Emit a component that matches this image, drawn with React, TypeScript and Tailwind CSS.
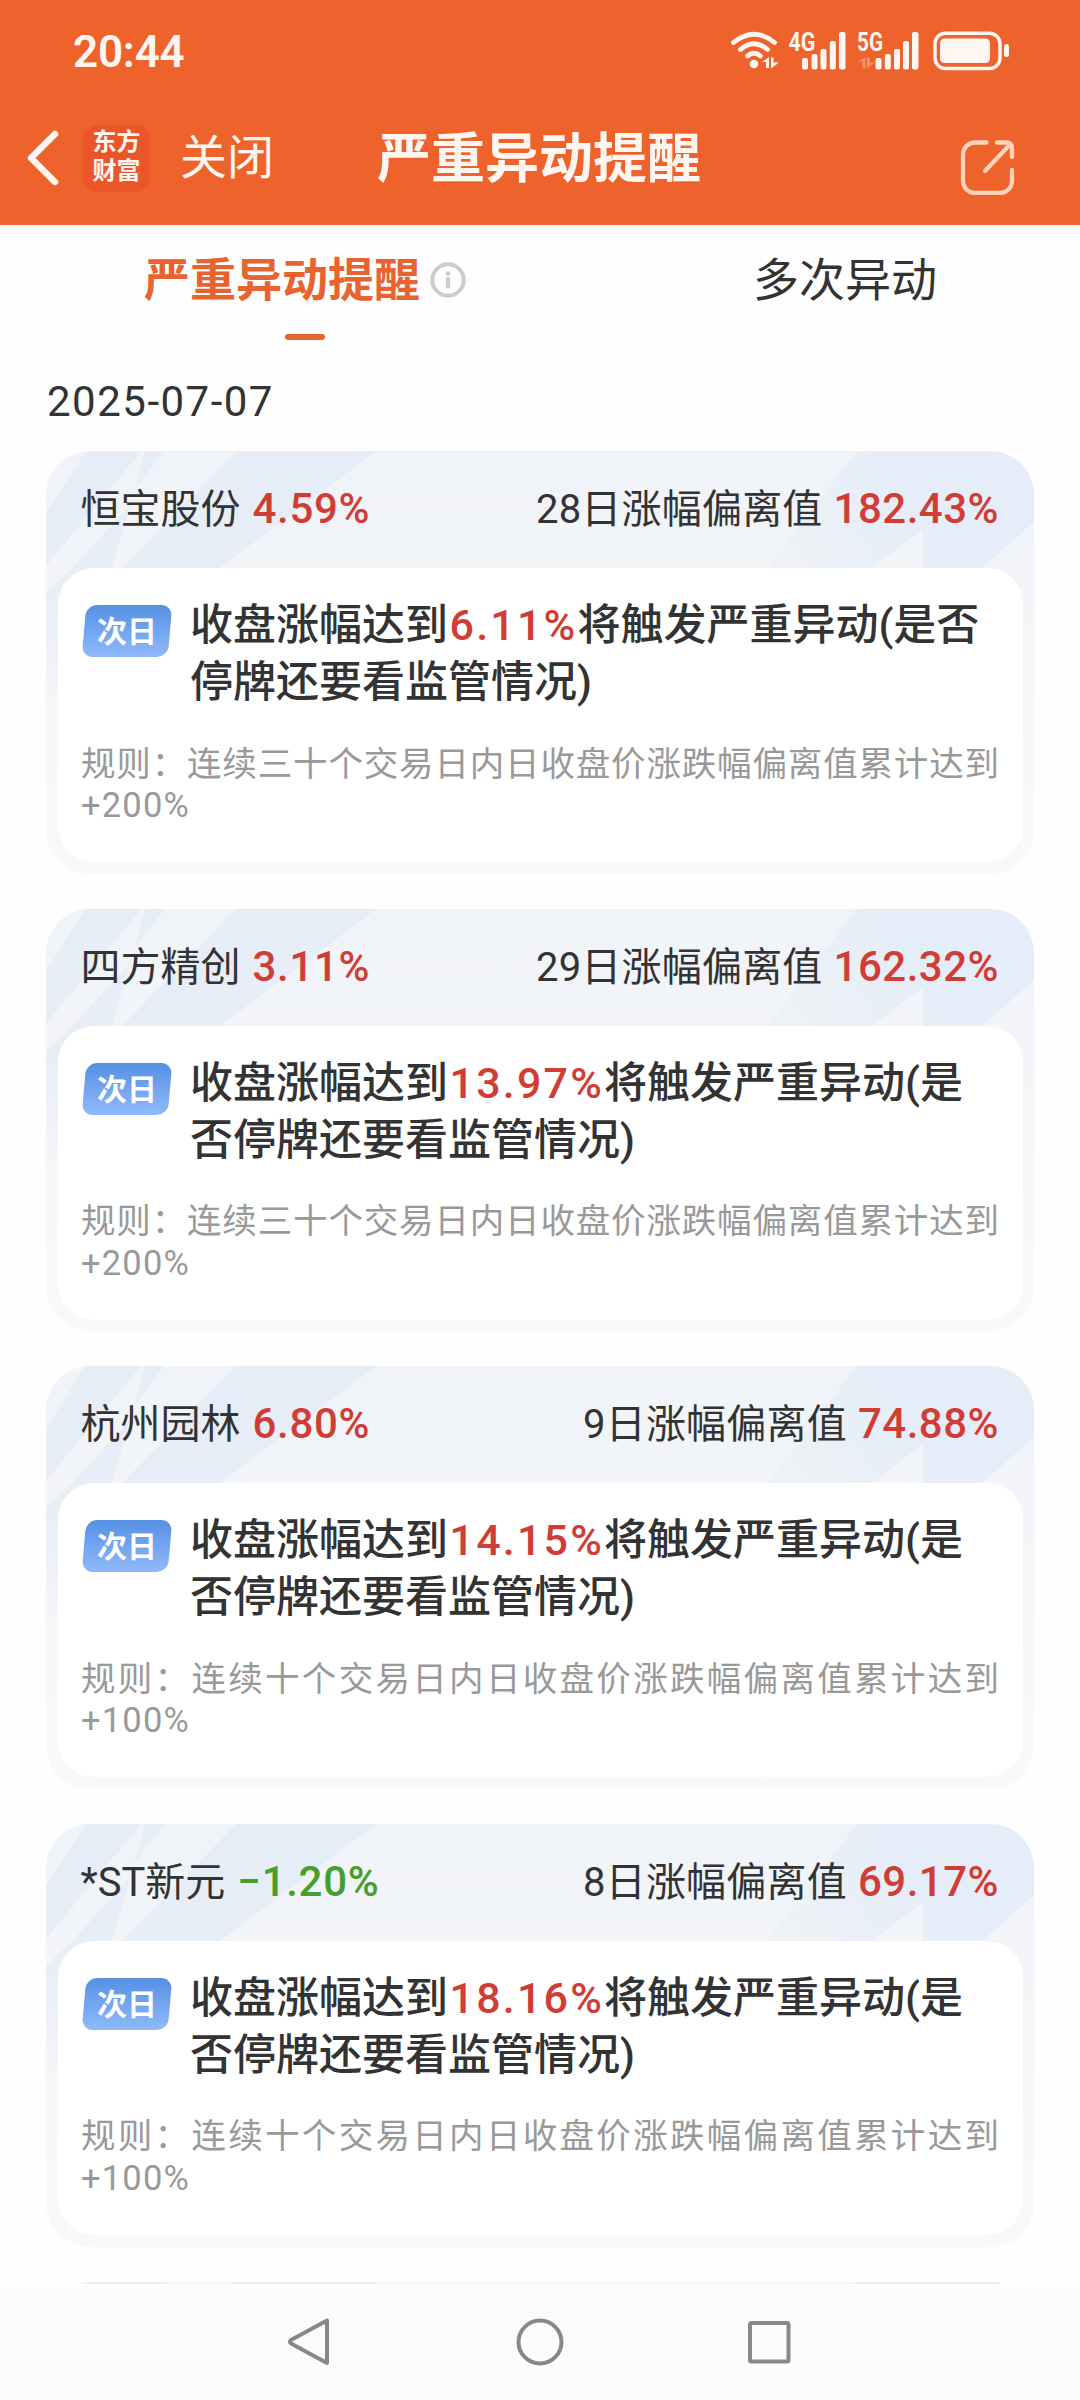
import React, { useState } from 'react';

interface StockAlert {
  name: string;
  change: string;
  days: number;
  deviation: string;
  target: string;
  rule: string;
  limit: string;
}

const alerts: StockAlert[] = [
  {
    name: '恒宝股份',
    change: '4.59%',
    days: 28,
    deviation: '182.43%',
    target: '6.11%',
    rule: '规则：连续三十个交易日内日收盘价涨跌幅偏离值累计达到',
    limit: '+200%',
  },
  {
    name: '四方精创',
    change: '3.11%',
    days: 29,
    deviation: '162.32%',
    target: '13.97%',
    rule: '规则：连续三十个交易日内日收盘价涨跌幅偏离值累计达到',
    limit: '+200%',
  },
  {
    name: '杭州园林',
    change: '6.80%',
    days: 9,
    deviation: '74.88%',
    target: '14.15%',
    rule: '规则：连续十个交易日内日收盘价涨跌幅偏离值累计达到',
    limit: '+100%',
  },
  {
    name: '*ST新元',
    change: '-1.20%',
    days: 8,
    deviation: '69.17%',
    target: '18.16%',
    rule: '规则：连续十个交易日内日收盘价涨跌幅偏离值累计达到',
    limit: '+100%',
  },
];

const StatusIcons: React.FC = () => (
  <svg width="290" height="50" viewBox="725 25 290 50" fill="#fff6f1">
    {/* wifi */}
    <g fill="none" stroke="#fff6f1" strokeWidth="4.8" strokeLinecap="round">
      <path d="M733.5 42.5Q754 26 774.5 42.5" />
      <path d="M740.5 49.5Q754 38 767.5 49.5" />
      <path d="M747.5 56Q754 50.5 760.5 56" />
    </g>
    <circle cx="754" cy="64" r="4.3" />
    <path d="M769 57v11h-3v-6h-4zM771 68.500v-11h2.500v5h5.500z" />
    {/* sim 1 */}
    <text x="788.5" y="51" className="text-[26px] font-bold" textLength="27" lengthAdjust="spacingAndGlyphs">4G</text>
    <rect x="802" y="58" width="6" height="11.5" rx="2" />
    <rect x="811.5" y="54" width="6" height="15.5" rx="2" />
    <rect x="820.5" y="49" width="6" height="20.5" rx="2" />
    <rect x="829.8" y="41" width="6" height="28.5" rx="2" />
    <rect x="839" y="32" width="6.5" height="37.5" rx="2" />
    {/* sim 2 */}
    <text x="857" y="51" className="text-[26px] font-bold" textLength="26" lengthAdjust="spacingAndGlyphs">5G</text>
    <path d="M865.5 57.5v11h-3v-7h-5zM867 68.5v-11h2.5v5h5z" fill="#f8946a" />
    <rect x="875.5" y="58" width="6" height="11.5" rx="2" />
    <rect x="884.8" y="54" width="6" height="15.5" rx="2" />
    <rect x="894" y="49" width="6" height="20.5" rx="2" />
    <rect x="903" y="41" width="6" height="28.5" rx="2" />
    <rect x="912" y="32" width="6.5" height="37.5" rx="2" />
    {/* battery */}
    <rect x="935" y="33.2" width="65" height="35.3" rx="10.5" fill="none" stroke="#fff6f1" strokeWidth="3.4" />
    <rect x="940" y="38.5" width="50" height="24.5" rx="4.5" />
    <rect x="1004" y="44" width="5" height="13" rx="2.5" />
  </svg>
);

const Header: React.FC = () => (
  <header className="h-[225px] bg-[#ed632b] text-[#fff6f1]">
    <div className="flex h-[100px] items-center justify-between pl-[73px] pr-[65px]">
      <span className="pt-[3px] text-[44px] font-semibold leading-none tracking-[-0.2px]">20:44</span>
      <StatusIcons />
    </div>
    <div className="flex h-[116px] items-center">
      <button className="ml-[25px] w-9" aria-label="返回">
        <svg width="36" height="56" viewBox="0 0 36 56" fill="none" stroke="#fff6f1" strokeWidth="6.5" strokeLinecap="round" strokeLinejoin="round">
          <path d="M30 4L6 28l24 24" />
        </svg>
      </button>
      <div className="ml-[22px] flex h-[67px] w-[67px] flex-col items-center justify-center rounded-[14px] bg-[#eb552a] pb-[3px] text-[24px] font-bold leading-[29px]">
        <span>东方</span>
        <span>财富</span>
      </div>
      <span className="ml-[30px] w-[100px] text-[47px] leading-[60px]">关闭</span>
      <h1 className="ml-[97px] w-[340px] pt-1 text-[54px] font-bold leading-[60px]">严重异动提醒</h1>
      <button className="ml-auto mr-[64px] mt-[18px]" aria-label="分享">
        <svg width="56" height="56" viewBox="0 0 56 56" fill="none" stroke="#fed3ba" strokeWidth="4.3" strokeLinecap="round" strokeLinejoin="round">
          <path d="M26.5 3.5H15A12 12 0 0 0 3 15.5V42A12 12 0 0 0 15 54H40A12 12 0 0 0 52 42V31" />
          <path d="M37 3.5H46Q52 3.5 52 9.5V18" />
          <path d="M49 6.5L25 32" />
        </svg>
      </button>
    </div>
  </header>
);

const InfoIcon: React.FC = () => (
  <svg width="36" height="36" viewBox="0 0 36 36" fill="none" stroke="#cccccc">
    <circle cx="18" cy="18" r="15.7" strokeWidth="4" />
    <path d="M18 17V24.5" strokeWidth="4.2" strokeLinecap="round" />
    <circle cx="18" cy="11.5" r="2.3" fill="#cccccc" stroke="none" />
  </svg>
);

const HeaderStripes: React.FC = () => (
  <svg className="absolute left-0 top-0" width="988" height="260" viewBox="0 0 988 260">
    <defs>
      <linearGradient id="leftBand" gradientUnits="userSpaceOnUse" x1="0" y1="0" x2="0" y2="260">
        <stop offset="0" stopColor="#e5edf6" />
        <stop offset="0.5" stopColor="#e8eef6" />
        <stop offset="1" stopColor="#e8eef6" stopOpacity="0" />
      </linearGradient>
      <linearGradient id="rightBand" gradientUnits="userSpaceOnUse" x1="740" y1="100" x2="850" y2="30">
        <stop offset="0" stopColor="#eef2f6" />
        <stop offset="1" stopColor="#e5edf8" />
      </linearGradient>
    </defs>
    <g fill="url(#leftBand)">
      <path d="M40 0H95L0 115V62Z" />
      <path d="M99 0H118L88 40Z" />
      <path d="M84 54L66 117V260H0V142L26 117Z" />
      <path d="M190 0H330L174 117H76Z" />
    </g>
    <path d="M811 0H988V71L936 117H877V78L826 117H721Z" fill="url(#rightBand)" />
  </svg>
);

const AlertCard: React.FC<{ alert: StockAlert }> = ({ alert }) => {
  const changeColor = alert.change.startsWith('-') ? 'text-[#459f2c]' : 'text-[#d13d35]';

  return (
    <div className="relative h-[422.67px] w-[988px] shrink-0 overflow-hidden rounded-[44px] bg-linear-to-b from-[#f0f3f8] to-[#f8f9fb] px-[11.5px]">
      <HeaderStripes />
      <div className="relative flex h-[115px] items-center justify-between pl-[23px] pr-[23.5px] text-[40px]">
        <div className="flex items-baseline gap-[12px]">
          <span>{alert.name}</span>
          <span className={`text-[42px] font-medium tracking-[0.7px] ${changeColor}`}>
            {alert.change.replace('-', '−')}
          </span>
        </div>
        <div className="flex items-baseline gap-[11px]">
          <span className="tracking-[0.2px]">{alert.days}日涨幅偏离值</span>
          <span className="text-[42px] font-medium tracking-[0.5px] text-[#d13d35]">{alert.deviation}</span>
        </div>
      </div>
      <div className="relative mt-[2px] h-[294px] rounded-[36px] bg-white px-[23.5px] pt-[29px]">
        <div className="flex">
          <div className="relative ml-[3px] mt-[8px] h-[52px] w-[86px] shrink-0">
            <div className="h-full w-full -skew-x-5 rounded-[11px] bg-linear-to-b from-[#5590e3] to-[#90b9fb]" />
            <span className="absolute inset-0 pt-px text-center text-[30px] font-bold leading-[52px] text-white">
              次日
            </span>
          </div>
          <p className="ml-[20px] w-[800px] text-[43px] font-medium leading-[57px]">
            收盘涨幅达到<span className="ml-[1.5px] tracking-[2.2px] text-[#d13d35]">{alert.target}</span>将触发严重异动(是否停牌还要看监管情况)
          </p>
        </div>
        <p className="mt-[32.5px] text-justify text-[34.5px] leading-[41.5px] text-[#999]">
          {alert.rule}
          <span className="tracking-[1.2px]">{alert.limit}</span>
        </p>
      </div>
    </div>
  );
};

const App: React.FC = () => {
  const [activeTab, setActiveTab] = useState(0);

  return (
    <div className="flex h-[2400px] w-[1080px] flex-col overflow-hidden bg-[#fefefe] font-[Roboto,'Noto_Sans_CJK_SC',sans-serif] text-[#333]">
      <Header />
      <nav className="flex h-[133px] justify-between pl-[144px] pr-[143px]">
        <button onClick={() => setActiveTab(0)} className="flex h-full flex-col items-center pt-[25px]">
          <div className={activeTab === 0 ? 'flex items-center gap-[10px] text-[46px] font-bold leading-[60px] text-[#e7632f]' : 'flex items-center gap-[10px] text-[46px] leading-[60px]'}>
            <span>严重异动提醒</span>
            <InfoIcon />
          </div>
          {activeTab === 0 && <div className="mt-6 h-[6px] w-10 rounded-full bg-[#e7632f]" />}
        </button>
        <button onClick={() => setActiveTab(1)} className="flex h-full flex-col items-center pt-[25px]">
          <span className="text-[46px] leading-[60px]">多次异动</span>
          {activeTab === 1 && <div className="mt-6 h-[6px] w-10 rounded-full bg-[#e7632f]" />}
        </button>
      </nav>
      <main className="flex min-h-0 flex-1 flex-col overflow-hidden px-[46px]">
        <div className="h-[93px] shrink-0 pl-px pt-[14px] text-[42px] leading-[60px] tracking-[1.5px]">2025‑07‑07</div>
        <div className="flex flex-col gap-[35px]">
          {alerts.map((alert) => (
            <AlertCard key={alert.name} alert={alert} />
          ))}
          <div className="relative h-[422px] shrink-0 overflow-hidden rounded-[44px] bg-[#f0f3f8]">
            <HeaderStripes />
          </div>
        </div>
      </main>
      <footer className="flex h-[116px] shrink-0 items-center justify-center bg-[#fcfcfd] pb-px">
        <svg width="504" height="50" viewBox="288 2317 504 50" fill="none" stroke="#888" strokeWidth="4" strokeLinejoin="round">
          <path d="M327 2320.5V2363L291 2343.5Q289 2342 291 2340Z" />
          <circle cx="540" cy="2342" r="21.5" />
          <rect x="750" y="2323" width="38.5" height="38.5" rx="1.5" />
        </svg>
      </footer>
    </div>
  );
};

export default App;
